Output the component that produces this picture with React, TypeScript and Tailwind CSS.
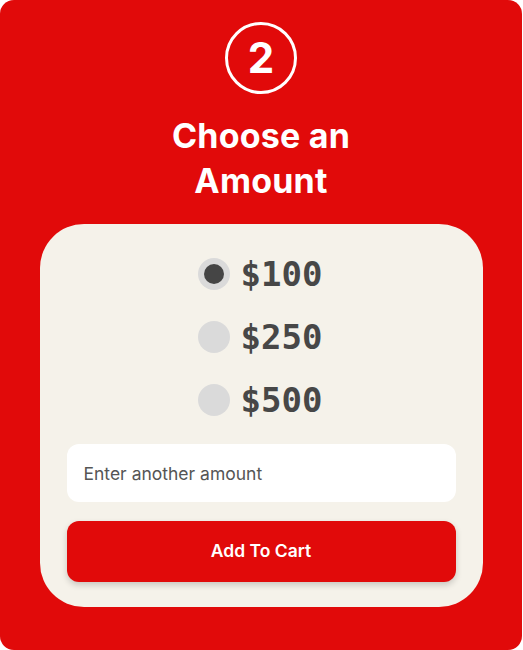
import { useState } from "react"

const amounts = ["$100", "$250", "$500"]

export default function App() {
  const [selected, setSelected] = useState("$100")

  return (
    <div className="w-[522px] h-[650px] bg-[#e10a0a] rounded-[14px] flex flex-col items-center pt-[22px] font-['Inter',sans-serif]">
      <div className="w-[72px] h-[72px] rounded-full border-[3px] border-white flex items-center justify-center text-white text-[42px] font-bold leading-none">
        2
      </div>
      <h1 className="mt-[19px] text-white text-[34px] font-bold leading-[45px] text-center tracking-[0.2px]">
        Choose an
        <br />
        Amount
      </h1>
      <div className="mt-[21px] w-[443px] bg-[#f5f2ea] rounded-[44px] px-[27px] pt-[34px] pb-[25px] flex flex-col">
        <div className="flex flex-col items-center gap-[31px]">
          {amounts.map((a) => (
            <button
              key={a}
              onClick={() => setSelected(a)}
              className="flex items-center gap-[11px] h-[32px] pr-[2px]"
            >
              <span className="w-[32px] h-[32px] rounded-full bg-[#dadada] flex items-center justify-center">
                {selected === a && <span className="w-[20px] h-[20px] rounded-full bg-[#454545]" />}
              </span>
              <span className="font-['DejaVu_Sans_Mono',monospace] font-bold text-[34px] text-[#474747] leading-none">
                {a}
              </span>
            </button>
          ))}
        </div>
        <input
          placeholder="Enter another amount"
          className="mt-[28px] h-[58px] w-full rounded-[12px] bg-white px-[17px] text-[17.5px] text-[#444] placeholder:text-[#555] outline-none"
        />
        <button className="mt-[19px] h-[61px] w-full rounded-[12px] bg-[#e10a0a] text-white text-[17.5px] font-semibold shadow-[0_3px_6px_rgba(0,0,0,0.18)]">
          Add To Cart
        </button>
      </div>
    </div>
  )
}
